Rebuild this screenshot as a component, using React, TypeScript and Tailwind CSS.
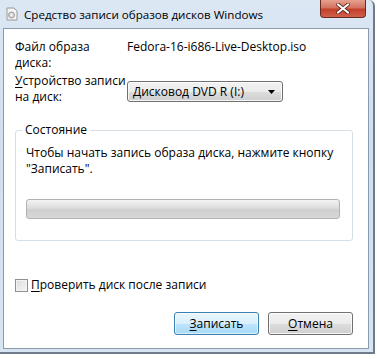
import React from 'react';

function DiscIcon() {
  return (
    <svg width="12" height="14" viewBox="0 0 12 14">
      <path d="M1 1h7l3 3v9H1z" fill="#f4f4f4" stroke="#9a9a9a" strokeWidth="1" />
      <circle cx="5.5" cy="8" r="3" fill="#d8d8d8" stroke="#8a8a8a" strokeWidth="0.8" />
      <circle cx="5.5" cy="8" r="0.9" fill="#fff" />
    </svg>
  );
}

function Btn({ label, hot, primary }: { label: string; hot: string; primary?: boolean }) {
  const rest = label.slice(1);
  return (
    <button
      className={
        'w-[85px] h-[23px] rounded-[3px] border text-[12px] text-black ' +
        (primary
          ? 'border-[#3c7fb1] bg-[linear-gradient(#eaf6fd_0%,#d9f0fc_50%,#bee6fd_50%,#a7d9f5_100%)] shadow-[inset_0_0_0_1px_#ffffff99]'
          : 'border-[#707070] bg-[linear-gradient(#f2f2f2_0%,#ebebeb_50%,#dddddd_50%,#cfcfcf_100%)] shadow-[inset_0_0_0_1px_#ffffffcc]')
      }
    >
      <span className="underline underline-offset-2">{hot}</span>
      {rest}
    </button>
  );
}

export default function App() {
  return (
    <div
      className="w-[377px] h-[359px] bg-white overflow-hidden"
      style={{ fontFamily: '"Open Sans", "Noto Sans", sans-serif' }}
    >
      <div className="relative w-[375px] h-[354px] bg-[linear-gradient(#dce7f4,#d0def0_40%,#d7e4f2)] border-r-2 border-b-2 border-[#6f7b8b] rounded-tr-[6px] flex flex-col">
        {/* title bar */}
        <div className="h-[28px] flex items-center pl-[6px] gap-[6px]">
          <DiscIcon />
          <span className="text-[11.6px] text-black leading-none pt-[1px]">
            Средство записи образов дисков Windows
          </span>
        </div>
        <div className="absolute top-0 right-[7px] w-[46px] h-[18px] rounded-b-[4px] border border-t-0 border-[#6b2a20] bg-[linear-gradient(#e6a090_0%,#d4735f_45%,#c2402a_55%,#d0604a_100%)] flex items-center justify-center">
          <svg width="14" height="11" viewBox="0 0 14 11">
            <path d="M2 1.5l10 8M12 1.5l-10 8" stroke="#5a2018" strokeWidth="3.6" strokeLinecap="round" />
            <path d="M2 1.5l10 8M12 1.5l-10 8" stroke="#ffffff" strokeWidth="2.2" strokeLinecap="round" />
          </svg>
        </div>

        {/* client area */}
        <div className="ml-[3px] w-[366px] h-[321px] bg-white border border-[#8a9bb0] pl-[11px] pr-[14px] pt-[10px] text-[12px] text-black leading-[16px]">
          <div className="grid grid-cols-[112px_1fr]">
            <div>
              Файл образа
              <br />
              диска:
            </div>
            <div>Fedora-16-i686-Live-Desktop.iso</div>
          </div>
          <div className="grid grid-cols-[112px_1fr] mt-[2px]">
            <div>
              <span className="underline underline-offset-2">У</span>стройство записи
              <br />
              на диск:
            </div>
            <div className="pt-[8px]">
              <div className="w-[156px] h-[21px] rounded-[3px] border border-[#707070] bg-[linear-gradient(#f2f2f2_0%,#ebebeb_50%,#dddddd_50%,#cfcfcf_100%)] shadow-[inset_0_0_0_1px_#ffffffcc] flex items-center justify-between pl-[5px] pr-[7px]">
                <span>Дисковод DVD R (I:)</span>
                <svg width="7" height="4" viewBox="0 0 7 4">
                  <path d="M0 0h7L3.5 4z" fill="#000" />
                </svg>
              </div>
            </div>
          </div>

          {/* group box */}
          <div className="relative mt-[25px] w-[338px] h-[111px] border border-[#d5dfe5] rounded-[3px] pl-[10px] pt-[14px]">
            <span className="absolute -top-[9px] left-[6px] bg-white px-[3px]">Состояние</span>
            <div>
              Чтобы начать запись образа диска, нажмите кнопку
              <br />
              "Записать".
            </div>
            <div className="mt-[22px] w-[314px] h-[20px] rounded-[3px] border border-[#b2b2b2] bg-[linear-gradient(#f3f3f3_0%,#dcdcdc_45%,#cfcfcf_55%,#d8d8d8_100%)]" />
          </div>

          {/* checkbox */}
          <div className="mt-[36px] flex items-center gap-[3px]">
            <div className="w-[13px] h-[13px] border border-[#8f8f8f] bg-[linear-gradient(135deg,#dcdcdc,#f6f6f6)] shadow-[inset_0_0_0_1px_#f4f4f4]" />
            <span>
              <span className="underline underline-offset-2">П</span>роверить диск после записи
            </span>
          </div>

          <div className="mt-[19px] flex justify-end gap-[9px] pr-[1px]">
            <Btn label="Записать" hot="З" primary />
            <Btn label="Отмена" hot="О" />
          </div>
        </div>
      </div>
    </div>
  );
}
